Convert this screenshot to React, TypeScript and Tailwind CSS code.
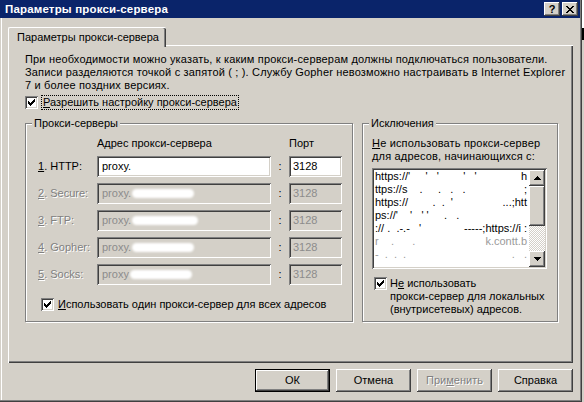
import React from 'react';

// classic 3D edges
const sunken = 'shadow-[inset_1px_1px_#808080,inset_-1px_-1px_#fff,inset_2px_2px_#404040,inset_-2px_-2px_#d4d0c8]';
const raised = 'shadow-[inset_-1px_-1px_#404040,inset_1px_1px_#fff,inset_-2px_-2px_#808080,inset_2px_2px_#d4d0c8]';
const etched = 'border border-[#808080] shadow-[1px_1px_0_#fff,inset_1px_1px_0_#fff]';
const grayText = 'text-[#808080] [text-shadow:1px_1px_0_#fff]';

const CheckMark = () => (
  <svg width="7" height="7" shapeRendering="crispEdges">
    <rect x="0" y="2" width="1" height="3" fill="#000" />
    <rect x="1" y="3" width="1" height="3" fill="#000" />
    <rect x="2" y="4" width="1" height="3" fill="#000" />
    <rect x="3" y="3" width="1" height="3" fill="#000" />
    <rect x="4" y="2" width="1" height="3" fill="#000" />
    <rect x="5" y="1" width="1" height="3" fill="#000" />
    <rect x="6" y="0" width="1" height="3" fill="#000" />
  </svg>
);

const CheckBox = () => (
  <div className={`w-[13px] h-[13px] shrink-0 bg-white flex items-center justify-center ${sunken}`}>
    <CheckMark />
  </div>
);

const Arrow = ({ down }: { down?: boolean }) => (
  <svg width="7" height="4" shapeRendering="crispEdges" className={down ? 'rotate-180' : ''}>
    <rect x="3" y="0" width="1" height="1" fill="#000" />
    <rect x="2" y="1" width="3" height="1" fill="#000" />
    <rect x="1" y="2" width="5" height="1" fill="#000" />
    <rect x="0" y="3" width="7" height="1" fill="#000" />
  </svg>
);

const CloseGlyph = () => (
  <svg width="8" height="7" shapeRendering="crispEdges">
    <path d="M0 0h2v1H0zM6 0h2v1H6zM1 1h2v1H1zM5 1h2v1H5zM2 2h4v1H2zM3 3h2v1H3zM2 4h4v1H2zM1 5h2v1H1zM5 5h2v1H5zM0 6h2v1H0zM6 6h2v1H6z" fill="#000" />
  </svg>
);

const Blob = ({ w = 62 }: { w?: number }) => (
  <span className="inline-block h-[9px] rounded-full bg-white blur-[1px] ml-[1px]" style={{ width: w }} />
);

const rows = [
  { n: '1', label: '. HTTP:', value: 'proxy.', enabled: true },
  { n: '2', label: '. Secure:', value: 'proxy.', enabled: false },
  { n: '3', label: '. FTP:', value: 'proxy.', enabled: false },
  { n: '4', label: '. Gopher:', value: 'proxy.', enabled: false },
  { n: '5', label: '. Socks:', value: 'proxy', enabled: false },
];

const exceptionLines: [string, string][] = [
  ["https://'     '   '        '   '", 'h'],
  ['ttps://s    .     .   .   .', ';'],
  ["https://        .  .  '     ", '...;htt'],
  ["ps://'    '   ' '     .   .", ''],
  [":// .  .-.-   '", '-----;https://i :'],
  ['r    .      .', 'k.contt.b'],
  ['-  .  .  .', '.   .'],
];

const Button = ({ children, isDefault, disabled }: { children: React.ReactNode; isDefault?: boolean; disabled?: boolean }) => (
  <div className={`w-[75px] h-[23px] ${isDefault ? 'border border-black' : ''}`}>
    <div className={`w-full h-full flex items-center justify-center ${raised} ${disabled ? grayText : ''}`}>{children}</div>
  </div>
);

export default function App() {
  return (
    <div className="w-[584px] h-[402px] flex bg-[#d4d0c8] font-['Liberation_Sans',Arial,sans-serif] text-[11px] leading-[13px] text-black overflow-hidden">
      <div className="w-[582px] h-full flex flex-col shadow-[inset_-1px_-1px_#404040,inset_-2px_-2px_#808080,inset_1px_0_#d4d0c8,inset_2px_0_#fff]">
        {/* title bar */}
        <div className="h-[18px] mr-[2px] bg-[#0a246a] flex items-center pl-[5px] pr-[2px]">
          <span className="flex-1 text-white font-bold text-[11.5px] tracking-[0.17px] pt-[1px]">Параметры прокси-сервера</span>
          <div className="flex gap-[2px]">
            <div className={`w-[16px] h-[14px] bg-[#d4d0c8] flex items-center justify-center font-bold text-[11px] leading-none ${raised}`}>?</div>
            <div className={`w-[16px] h-[14px] bg-[#d4d0c8] flex items-center justify-center ${raised}`}>
              <CloseGlyph />
            </div>
          </div>
        </div>

        {/* body */}
        <div className="flex-1 flex flex-col pt-[9px] pl-[8px] pr-[9px]">
          <div className="relative z-10 w-[158px] h-[20px] -mb-[2px] bg-[#d4d0c8] border-t border-l border-white rounded-tl-[2px] rounded-tr-[2px] shadow-[inset_-1px_0_#404040,inset_-2px_0_#808080] pl-[8px] pt-[3px]">
            Параметры прокси-сервера
          </div>

          <div className={`h-[318px] flex flex-col pt-[8px] shadow-[inset_1px_1px_#fff,inset_-1px_-1px_#404040,inset_-2px_-2px_#808080]`}>
            <p className="pl-[17px] whitespace-nowrap tracking-[0.17px]">
              При необходимости можно указать, к каким прокси-серверам должны подключаться пользователи.
              <br />
              Записи разделяются точкой с запятой ( ; ). Службу Gopher невозможно настраивать в Internet Explorer
              <br />7 и более поздних версиях.
            </p>

            <div className="mt-[4px] pl-[17px] flex items-center gap-[4px]">
              <CheckBox />
              <span className="outline-1 outline-dotted outline-black px-[1px]">
                <span className="underline">Р</span>азрешить настройку прокси-сервера
              </span>
            </div>

            <div className="mt-[14px] pl-[17px] flex gap-[9px]">
              {/* proxy servers group */}
              <div className={`relative w-[328px] h-[199px] ${etched} pt-[13px] pl-[12px]`}>
                <span className="absolute -top-[7px] left-[6px] bg-[#d4d0c8] px-[2px]">Прокси-серверы</span>
                <div className="grid grid-cols-[59px_174px_18px_53px] gap-y-[6px] items-center">
                  <span />
                  <span>Адрес прокси-сервера</span>
                  <span />
                  <span>Порт</span>
                  {rows.map((r) => (
                    <React.Fragment key={r.n}>
                      <span className={r.enabled ? '' : grayText}>
                        <span className="underline">{r.n}</span>
                        {r.label}
                      </span>
                      <div className={`h-[21px] flex items-center pl-[5px] whitespace-nowrap overflow-hidden ${sunken} ${r.enabled ? 'bg-white' : 'bg-[#d4d0c8] text-[#8c8c8c]'}`}>
                        {r.value}
                        {!r.enabled && <Blob w={r.n === '3' ? 66 : 62} />}
                      </div>
                      <span className="text-center">:</span>
                      <div className={`h-[21px] flex items-center pl-[4px] ${sunken} ${r.enabled ? 'bg-white' : 'bg-[#d4d0c8] text-[#8c8c8c]'}`}>3128</div>
                    </React.Fragment>
                  ))}
                </div>
                <div className="mt-[13px] ml-[3px] flex items-center gap-[4px]">
                  <CheckBox />
                  <span>
                    <span className="underline">И</span>спользовать один прокси-сервер для всех адресов
                  </span>
                </div>
              </div>

              {/* exceptions group */}
              <div className={`relative w-[196px] h-[199px] ${etched} pt-[13px] pl-[9px]`}>
                <span className="absolute -top-[7px] left-[6px] bg-[#d4d0c8] px-[2px]">Исключения</span>
                <p className="whitespace-nowrap tracking-[0.17px]">
                  <span className="underline">Н</span>е использовать прокси-сервер
                  <br />
                  для адресов, начинающихся с:
                </p>
                <div className={`mt-[5px] w-[175px] h-[101px] bg-white flex p-[2px] ${sunken}`}>
                  <div className="flex-1 pl-[1px] pr-[2px] overflow-hidden">
                    {exceptionLines.map(([l, r], i) => (
                      <div key={i} className="flex justify-between whitespace-pre">
                        <span className={i >= 5 ? 'text-[#9a9a9a]' : ''}>{l}</span>
                        <span className={i >= 5 ? 'text-[#9a9a9a]' : ''}>{r}</span>
                      </div>
                    ))}
                  </div>
                  <div className="w-[16px] flex flex-col">
                    <div className={`h-[16px] bg-[#d4d0c8] flex items-center justify-center ${raised}`}>
                      <Arrow />
                    </div>
                    <div className={`h-[40px] bg-[#d4d0c8] ${raised}`} />
                    <div className="flex-1 bg-[repeating-conic-gradient(#fff_0_25%,#d4d0c8_0_50%)] bg-[length:2px_2px]" />
                    <div className={`h-[16px] bg-[#d4d0c8] flex items-center justify-center ${raised}`}>
                      <Arrow down />
                    </div>
                  </div>
                </div>
                <div className="mt-[8px] ml-[2px] flex items-start gap-[3px]">
                  <CheckBox />
                  <span className="whitespace-nowrap">
                    Н<span className="underline">е</span> использовать
                    <br />
                    прокси-сервер для локальных
                    <br />
                    (внутрисетевых) адресов.
                  </span>
                </div>
              </div>
            </div>
          </div>

          <div className="mt-[6px] flex justify-end gap-[6px]">
            <Button isDefault>ОК</Button>
            <Button>Отмена</Button>
            <Button disabled>
              При<span className="underline">м</span>енить
            </Button>
            <Button>Справка</Button>
          </div>
        </div>
      </div>
      <div className="w-[2px] h-full flex flex-col bg-[#d4d0c8]">
        <div className="h-[28px] bg-white" />
        <div className="h-[12px] bg-black" />
      </div>
    </div>
  );
}
